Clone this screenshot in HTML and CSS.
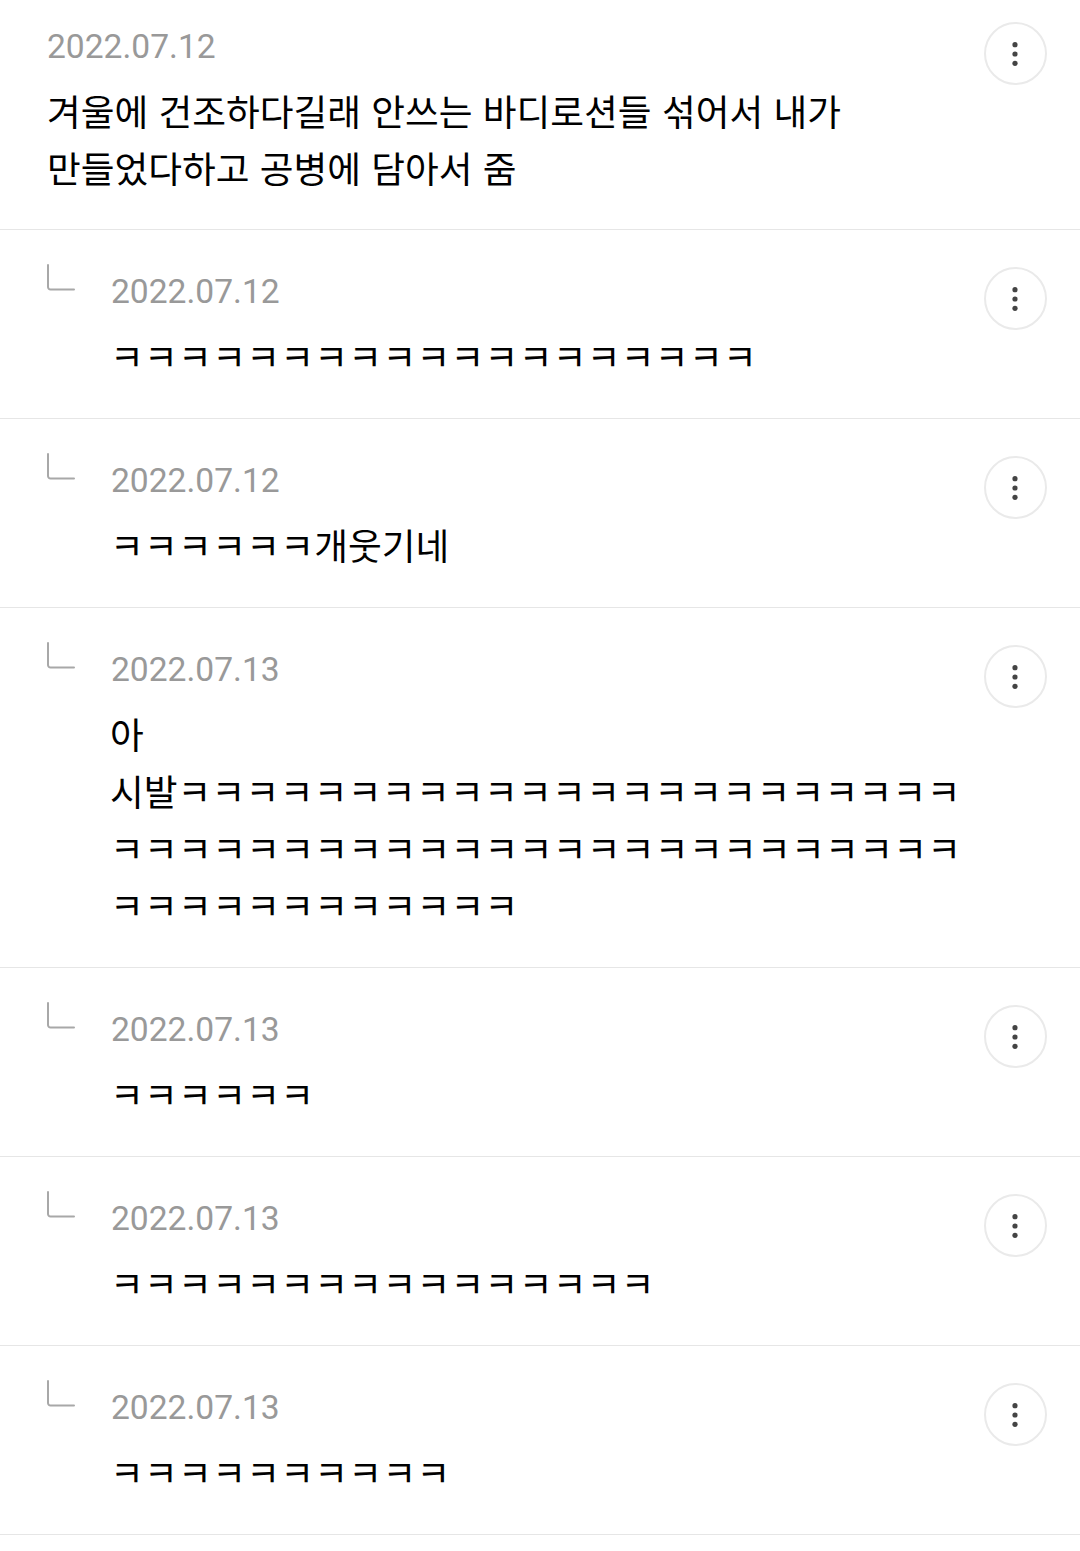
FILE: index.html
```html
<!DOCTYPE HTML>
<html lang="ko">
  <head>
    <meta charset="utf-8">
    <title>Comments</title>
    <link rel="stylesheet" href="styles.css">
  </head>
  <body>
    <svg class="Defs" width="0" height="0">
      <symbol id="ReplyArrow" viewBox="0 0 28 28">
        <path d="M1 1V23a2.500 2.500 0 0 0 2.500 2.500H27" fill="none" stroke="#a8a8a8" stroke-width="2" stroke-linecap="round"/>
      </symbol>
      <symbol id="Dots" viewBox="0 0 6 24">
        <circle cx="3" cy="2.700" r="2.600"/>
        <circle cx="3" cy="12" r="2.600"/>
        <circle cx="3" cy="21.300" r="2.600"/>
      </symbol>
    </svg>
    <div class="List">
      <div class="Item First">
        <div class="Body">
          <div class="Date">2022.07.12</div>
          <div class="Text">겨울에 건조하다길래 안쓰는 바디로션들 섞어서 내가<br>만들었다하고 공병에 담아서 줌</div>
        </div>
        <button class="MenuBtn"><svg class="DotsIcon"><use href="#Dots"/></svg></button>
      </div>
      <div class="Item">
        <svg class="Arrow"><use href="#ReplyArrow"/></svg>
        <div class="Body">
          <div class="Date">2022.07.12</div>
          <div class="Text"><span class="Laugh">ㅋㅋㅋㅋㅋㅋㅋㅋㅋㅋㅋㅋㅋㅋㅋㅋㅋㅋㅋ</span></div>
        </div>
        <button class="MenuBtn"><svg class="DotsIcon"><use href="#Dots"/></svg></button>
      </div>
      <div class="Item">
        <svg class="Arrow"><use href="#ReplyArrow"/></svg>
        <div class="Body">
          <div class="Date">2022.07.12</div>
          <div class="Text"><span class="Laugh">ㅋㅋㅋㅋㅋㅋ</span>개웃기네</div>
        </div>
        <button class="MenuBtn"><svg class="DotsIcon"><use href="#Dots"/></svg></button>
      </div>
      <div class="Item">
        <svg class="Arrow"><use href="#ReplyArrow"/></svg>
        <div class="Body">
          <div class="Date">2022.07.13</div>
          <div class="Text">아<br>시발<span class="Laugh">ㅋㅋㅋㅋㅋㅋㅋㅋㅋㅋㅋㅋㅋㅋㅋㅋㅋㅋㅋㅋㅋㅋㅋ<br>ㅋㅋㅋㅋㅋㅋㅋㅋㅋㅋㅋㅋㅋㅋㅋㅋㅋㅋㅋㅋㅋㅋㅋㅋㅋ<br>ㅋㅋㅋㅋㅋㅋㅋㅋㅋㅋㅋㅋ</span></div>
        </div>
        <button class="MenuBtn"><svg class="DotsIcon"><use href="#Dots"/></svg></button>
      </div>
      <div class="Item">
        <svg class="Arrow"><use href="#ReplyArrow"/></svg>
        <div class="Body">
          <div class="Date">2022.07.13</div>
          <div class="Text"><span class="Laugh">ㅋㅋㅋㅋㅋㅋ</span></div>
        </div>
        <button class="MenuBtn"><svg class="DotsIcon"><use href="#Dots"/></svg></button>
      </div>
      <div class="Item">
        <svg class="Arrow"><use href="#ReplyArrow"/></svg>
        <div class="Body">
          <div class="Date">2022.07.13</div>
          <div class="Text"><span class="Laugh">ㅋㅋㅋㅋㅋㅋㅋㅋㅋㅋㅋㅋㅋㅋㅋㅋ</span></div>
        </div>
        <button class="MenuBtn"><svg class="DotsIcon"><use href="#Dots"/></svg></button>
      </div>
      <div class="Item">
        <svg class="Arrow"><use href="#ReplyArrow"/></svg>
        <div class="Body">
          <div class="Date">2022.07.13</div>
          <div class="Text"><span class="Laugh">ㅋㅋㅋㅋㅋㅋㅋㅋㅋㅋ</span></div>
        </div>
        <button class="MenuBtn"><svg class="DotsIcon"><use href="#Dots"/></svg></button>
      </div>
    </div>
  </body>
</html>
```

FILE: styles.css
```css
* {
  margin: 0;
  padding: 0;
  box-sizing: border-box;
}

html, body {
  background: #fff;
}

.Defs {
  display: block;
  height: 0;
}

.Item {
  display: flex;
  align-items: flex-start;
  padding: 37px 33px 34px 47px;
  border-bottom: 1px solid #e6e6e6;
}

.First {
  padding-top: 22px;
  padding-bottom: 33px;
}

.Arrow {
  flex: none;
  width: 28px;
  height: 28px;
  margin-top: -3px;
  margin-right: 36px;
}

.Body {
  flex: 1;
  min-width: 0;
}

.Date {
  height: 48px;
  margin-bottom: 12px;
  font-family: Roboto, "Noto Sans CJK KR", sans-serif;
  font-size: 33.600px;
  line-height: 50px;
  color: #999;
}

.Text {
  margin-left: -1px;
  font-family: "Noto Sans CJK KR", sans-serif;
  font-size: 36.700px;
  line-height: 57px;
  color: #000;
  white-space: nowrap;
}

.First .Text {
  margin-left: 0;
}

.Laugh {
  letter-spacing: 0.300px;
}

.MenuBtn {
  flex: none;
  width: 63px;
  height: 63px;
  display: flex;
  align-items: center;
  justify-content: center;
  background: #fff;
  border: 2px solid #eaeaea;
  border-radius: 50%;
}

.DotsIcon {
  width: 6px;
  height: 24px;
  margin-right: 1px;
  fill: #444;
}
```
